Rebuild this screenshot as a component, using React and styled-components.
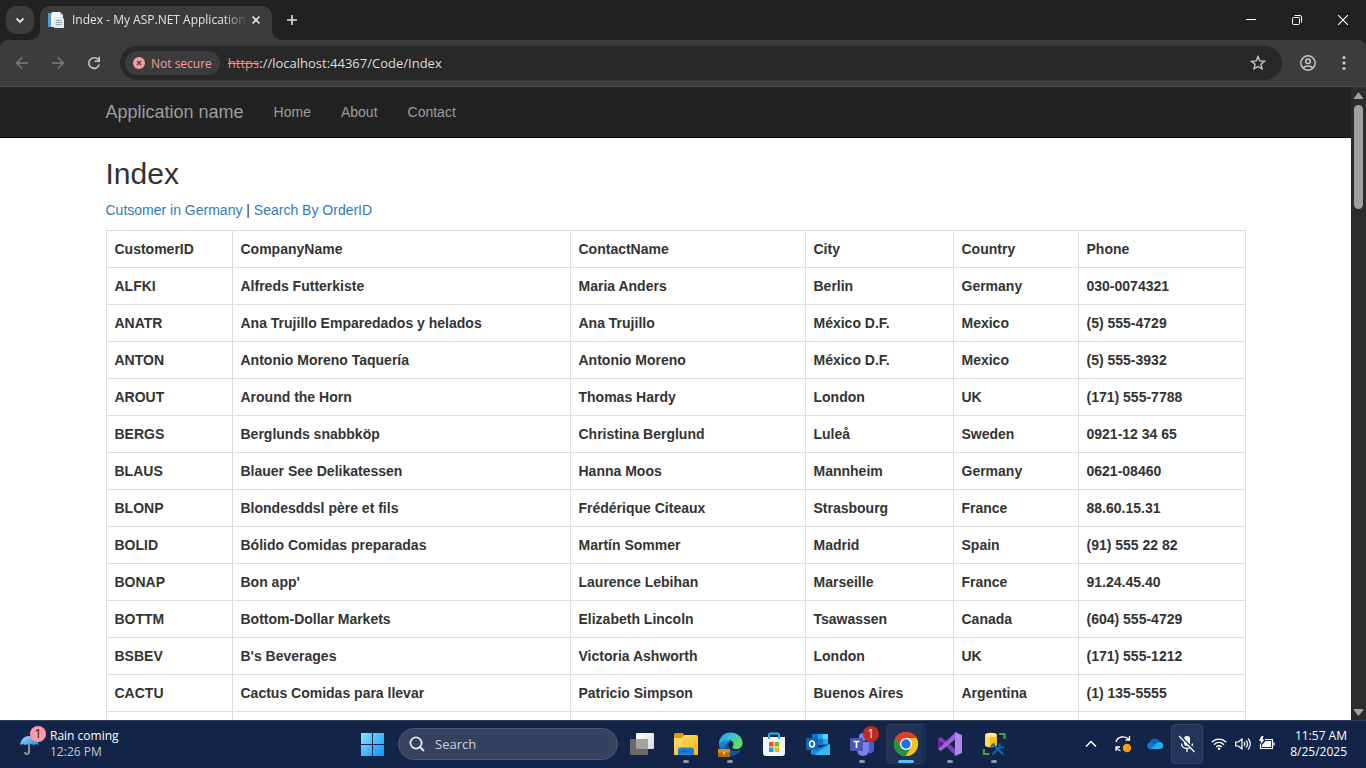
import React from "react";
import styled, { createGlobalStyle, css } from "styled-components";

const uiFont = `"Segoe UI", "Open Sans", "Noto Sans", sans-serif`;
const pageFont = `"Helvetica Neue", Helvetica, Arial, "Liberation Sans", sans-serif`;

const GlobalStyle = createGlobalStyle`
  *, *::before, *::after { box-sizing: border-box; }
  body { margin: 0; background: #202222; }
  button, input { font: inherit; color: inherit; }
  button { border: 0; padding: 0; margin: 0; background: none; cursor: default; }
`;

const Screen = styled.div`
  display: flex;
  flex-direction: column;
  height: 100vh;
  overflow: hidden;
  font-family: ${uiFont};
  font-size: 12px;
`;

/* ---------- browser frame ---------- */

const TabStrip = styled.header`
  display: flex;
  align-items: flex-end;
  flex: none;
  height: 40px;
  padding-left: 6px;
  background: #202222;
  color: #e3e3e3;
`;

const TabSearch = styled.button`
  display: grid;
  place-items: center;
  width: 28px;
  height: 28px;
  margin: 0 6px 6px 0;
  border-radius: 10px;
  background: #3c3c3c;
`;

const Tab = styled.div`
  position: relative;
  display: flex;
  align-items: center;
  width: 232px;
  height: 34px;
  padding: 0 8px 6px 8px;
  border-radius: 10px 10px 0 0;
  background: #3c3c3c;

  &::before,
  &::after {
    content: "";
    position: absolute;
    bottom: 0;
    width: 10px;
    height: 10px;
  }
  &::before {
    right: 100%;
    background: radial-gradient(circle at 0 0, transparent 10px, #3c3c3c 10px);
  }
  &::after {
    left: 100%;
    background: radial-gradient(circle at 100% 0, transparent 10px, #3c3c3c 10px);
  }
`;

const TabTitle = styled.span`
  flex: 1;
  min-width: 0;
  margin-left: 8px;
  overflow: hidden;
  white-space: nowrap;
  line-height: 16px;
  mask-image: linear-gradient(90deg, #000 calc(100% - 24px), transparent);
`;

const TabButton = styled.button`
  display: grid;
  place-items: center;
  width: 16px;
  height: 16px;
`;

const NewTab = styled.button`
  display: grid;
  place-items: center;
  width: 28px;
  height: 28px;
  margin: 0 0 6px 6px;
`;

const WindowControls = styled.div`
  display: flex;
  margin-left: auto;
  height: 40px;
  color: #fff;
`;

const WindowButton = styled.button`
  display: grid;
  place-items: center;
  width: 46px;
`;

const Toolbar = styled.div`
  display: flex;
  align-items: center;
  flex: none;
  height: 47px;
  padding: 0 4px;
  border-bottom: 1px solid #4a4a4a;
  border-radius: 8px 8px 0 0;
  background: #3c3c3c;
  color: #c7c7c7;
`;

const ToolButton = styled.button`
  display: grid;
  place-items: center;
  width: 36px;
  height: 34px;
  color: ${(p) => (p.disabled ? "#7c7c7c" : "#c7c7c7")};
`;

const Omnibox = styled.div`
  display: flex;
  align-items: center;
  flex: 1;
  height: 34px;
  margin: 0 8px;
  padding: 0 6px 0 5px;
  border-radius: 17px;
  background: #282828;
`;

const SecurityChip = styled.button`
  display: flex;
  align-items: center;
  gap: 6px;
  height: 24px;
  padding: 0 8px;
  margin-right: 8px;
  border-radius: 12px;
  background: #3c3c3c;
  color: #f2a097;
  font-weight: 500;
  white-space: nowrap;
`;

const UrlLabel = styled.label`
  color: #f28b82;
  font-size: 13px;
  line-height: 20px;
  text-decoration: line-through;
`;

const UrlInput = styled.input`
  flex: 1;
  min-width: 0;
  height: 20px;
  padding: 0;
  border: 0;
  outline: 0;
  background: none;
  color: #dedede;
  font-size: 13px;
`;

/* ---------- page ---------- */

const Viewport = styled.div`
  display: flex;
  flex: 1;
  min-height: 0;
`;

const Page = styled.div`
  flex: 1;
  min-width: 0;
  overflow: hidden;
  background: #fff;
  color: #333;
  font-family: ${pageFont};
  font-size: 14px;
  line-height: 20px;
`;

const Container = styled.div`
  max-width: 1170px;
  margin: 0 auto;
  padding: 0 15px;
`;

const Navbar = styled.nav`
  border-bottom: 1px solid #080808;
  background: #222;
`;

const NavInner = styled(Container)`
  display: flex;
  align-items: center;
  height: 50px;
`;

const NavLink = styled.a`
  padding-right: 15px;
  margin-right: 15px;
  color: #9d9d9d;
  font-size: ${(p) => (p.$brand ? "18px" : "14px")};
  text-decoration: none;
`;

const Heading = styled.h2`
  margin: 19px 0 10px;
  font-size: 30px;
  line-height: 33px;
  font-weight: 400;
`;

const Links = styled.p`
  margin: 0 0 10px;
  a {
    color: #337ab7;
    text-decoration: none;
  }
`;

const Table = styled.table`
  width: 100%;
  table-layout: fixed;
  border-collapse: collapse;
  border: 1px solid #ddd;
`;

const Cell = styled.th`
  height: 37px;
  padding: 8px;
  border: 1px solid #ddd;
  font-weight: 700;
  text-align: left;
`;

const ScrollTrack = styled.div`
  display: flex;
  flex-direction: column;
  align-items: center;
  width: 15px;
  padding: 5px 0 3px;
  background: #2c2c2c;
  color: #9f9f9f;
`;

const ScrollThumb = styled.div`
  width: 9px;
  height: 104px;
  margin: 5px 0 auto;
  border-radius: 5px;
  background: #9f9f9f;
`;

/* ---------- taskbar ---------- */

const Taskbar = styled.footer`
  display: grid;
  grid-template-columns: 1fr auto 1fr;
  flex: none;
  height: 48px;
  padding-bottom: 1px;
  border-top: 1px solid #35425c;
  background: #122549;
  color: #fff;
`;

const Weather = styled.button`
  position: relative;
  display: flex;
  align-items: center;
  gap: 4px;
  padding-left: 18px;
  justify-self: start;
  text-align: left;
  line-height: 16px;
`;

const Muted = styled.span`
  display: block;
  color: #c3c9d5;
`;

const Apps = styled.div`
  display: flex;
  align-items: center;
`;

const running = css`
  &::after {
    content: "";
    position: absolute;
    bottom: 4px;
    left: 50%;
    width: ${(p) => (p.$active ? "16px" : "6px")};
    height: 3px;
    border-radius: 2px;
    background: ${(p) => (p.$active ? "#4cc2ff" : "#8d98aa")};
    transform: translateX(-50%);
  }
`;

const AppButton = styled.button`
  position: relative;
  display: grid;
  place-items: center;
  width: 44px;
  height: 46px;
  ${(p) => (p.$running || p.$active ? running : "")}
`;

const ActivePlate = styled.span`
  display: grid;
  place-items: center;
  justify-self: start;
  width: 40px;
  height: 40px;
  margin-left: 2px;
  border: 1px solid #2b3a5a;
  border-right: 5px solid #1a2c50;
  border-radius: 5px;
  background: #213255;
  padding-left: 4px;
`;

const Badge = styled.span`
  position: absolute;
  top: 5px;
  left: ${(p) => (p.$soft ? "30px" : "23px")};
  width: 16px;
  height: 16px;
  border-radius: 8px;
  background: ${(p) => (p.$soft ? "#ff99a4" : "#c42b1c")};
  color: ${(p) => (p.$soft ? "#101010" : "#fff")};
  line-height: 16px;
  text-align: center;
`;

const SearchBox = styled.label`
  display: flex;
  align-items: center;
  gap: 10px;
  width: 220px;
  height: 32px;
  margin: 0 2px 0 4px;
  padding: 0 10px;
  border: 1px solid #4a5875;
  border-radius: 16px;
  background: #35425f;
  color: #e6e9ee;

  input {
    flex: 1;
    min-width: 0;
    padding: 0;
    border: 0;
    outline: 0;
    background: none;
    font-size: 13px;
  }
  input::placeholder {
    color: #cdd2dc;
    opacity: 1;
  }
`;

const Tray = styled.div`
  display: flex;
  align-items: center;
  justify-self: end;
  padding-right: 19px;
`;

const TrayButton = styled.button`
  display: grid;
  place-items: center;
  width: 32px;
  height: 40px;
  border: 1px solid ${(p) => (p.$boxed ? "#344463" : "transparent")};
  border-radius: 4px;
  background: ${(p) => (p.$boxed ? "#22345a" : "none")};
`;

const QuickSettings = styled.button`
  display: flex;
  gap: 8px;
  padding: 0 4px;
  margin-left: 4px;
`;

const Clock = styled.button`
  width: 68px;
  text-align: right;
  line-height: 16px;
  white-space: nowrap;
`;

/* ---------- icons ---------- */

const Icon = ({ w = 16, h, children, stroke = 1.5 }) => (
  <svg
    width={w}
    height={h || w}
    viewBox={`0 0 ${w} ${h || w}`}
    fill="none"
    stroke="currentColor"
    strokeWidth={stroke}
    aria-hidden="true"
  >
    {children}
  </svg>
);

const Favicon = () => (
  <Icon stroke={0}>
    <path d="M0 1h11v14H0z" fill="#e9eef2" />
    <path d="M0 1h3v14H0z" fill="#4f9bd0" />
    <path d="M4 0h8l3 3v8H4z" fill="#f6f9fb" />
    <path d="M6 5h8l2 2v9H6z" fill="#dfe6ec" />
    <path d="M8 8h5v1H8zM8 10h6v1H8zM8 12h6v1H8z" fill="#9aabb8" />
    <path d="M12 0v3h3z" fill="#b9c6d0" />
  </Icon>
);

const Umbrella = () => (
  <svg width="28" height="28" viewBox="0 0 28 28" aria-hidden="true">
    <defs>
      <linearGradient id="umb" x1="0" y1="0" x2="1" y2="1">
        <stop offset="0" stopColor="#a9dcff" />
        <stop offset="1" stopColor="#1d86e3" />
      </linearGradient>
    </defs>
    <path d="M11 14v8a2 2 0 0 1-4 0" fill="none" stroke="#8d8f94" strokeWidth="2" />
    <path d="M2 15C3 9 7 6 11 6s9 3 10 9c-2-1-4-1-5 0-2-1-7-1-9 0-1-1-3-1-5 0z" fill="url(#umb)" />
  </svg>
);

const StartLogo = () => (
  <svg width="24" height="24" viewBox="0 0 24 24" aria-hidden="true">
    <defs>
      <linearGradient id="win" x1="1" y1="1" x2="24" y2="24" gradientUnits="userSpaceOnUse">
        <stop offset="0" stopColor="#8be4ff" />
        <stop offset="1" stopColor="#0a93fb" />
      </linearGradient>
    </defs>
    <path fill="url(#win)" d="M1 1h11v11H1zM13 1h11v11H13zM1 13h11v11H1zM13 13h11v11H13z" />
  </svg>
);

const TaskView = () => (
  <svg width="24" height="24" viewBox="0 0 24 24" aria-hidden="true">
    <defs>
      <linearGradient id="tv" x1="0" y1="0" x2="1" y2="1">
        <stop offset="0" stopColor="#fff" />
        <stop offset="1" stopColor="#d9d9d9" />
      </linearGradient>
    </defs>
    <rect x="6" y="1" width="18" height="16" rx="1" fill="url(#tv)" />
    <rect x="0" y="7" width="18" height="16" rx="1" fill="#6a6a6a" />
    <rect x="6" y="7" width="12" height="10" fill="#a2a2a2" />
  </svg>
);

const Explorer = () => (
  <svg width="24" height="24" viewBox="0 0 24 24" aria-hidden="true">
    <defs>
      <linearGradient id="fol" x1="0" y1="0" x2="1" y2="1">
        <stop offset="0" stopColor="#ffe07a" />
        <stop offset="1" stopColor="#fbb50f" />
      </linearGradient>
    </defs>
    <path d="M0 2.500a1.500 1.500 0 0 1 1.500-1.500H9l1.500 3v3H0z" fill="#dc9a0b" />
    <path d="M0 6h8l2.500-3h12A1.500 1.500 0 0 1 24 4.500V23H0z" fill="url(#fol)" />
    <path d="M4 23v-5a2.500 2.500 0 0 1 2.500-2.500h11A2.500 2.500 0 0 1 20 18v5z" fill="#1581d8" />
    <path d="M7.500 19.500h9" stroke="#0c62b0" strokeWidth="1.500" />
  </svg>
);

const Edge = () => (
  <svg width="25" height="25" viewBox="0 0 25 25" aria-hidden="true">
    <defs>
      <linearGradient id="eg" x1="0" y1="0" x2="1" y2=".5">
        <stop offset="0" stopColor="#2193d8" />
        <stop offset=".5" stopColor="#35c3d3" />
        <stop offset="1" stopColor="#68dc55" />
      </linearGradient>
      <linearGradient id="eb" x1="0" y1="0" x2="0" y2="1">
        <stop offset="0" stopColor="#1b9de2" />
        <stop offset="1" stopColor="#0c4a9c" />
      </linearGradient>
    </defs>
    <path d="M1 12a11.500 11.500 0 0 0 18 10c2-1 3-3 3-4-5 3-12 1-12-5 0-2 1-3 2-4C9 6 2 7 1 12z" fill="url(#eb)" />
    <path d="M1 12C1 5 6 .5 12.500.5 19 .5 24.500 5 24.500 11c0 4-3 6-6 6-4 0-5-1-3.500-3 1.500-3-.5-6-5-6-4 0-7 1-9 4z" fill="url(#eg)" />
    <path d="M11 10c-3 6 2 11 12 8-3 5-9 7-13 5-4-4-4-10 1-13z" fill="#174f9c" />
    <rect x="0" y="17" width="12" height="8" rx="1" fill="#c4670c" />
    <path d="M0 17h12v3.500H0z" fill="#e08a1c" />
    <path d="M5 20h2v2.500H5z" fill="#ffd24a" />
  </svg>
);

const Store = () => (
  <svg width="24" height="24" viewBox="0 0 24 24" aria-hidden="true">
    <path d="M7 7V3a1.500 1.500 0 0 1 1.500-1.500h7A1.500 1.500 0 0 1 17 3v4" fill="none" stroke="#28b4f0" strokeWidth="2" />
    <path d="M1 5h22v16a3 3 0 0 1-3 3H4a3 3 0 0 1-3-3z" fill="#f4f5f7" />
    <path d="M6 5h2v2H6zM16 5h2v2h-2z" fill="#28b4f0" />
    <path d="M7 10h4.500v4.500H7z" fill="#f25022" />
    <path d="M12.500 10H17v4.500h-4.500z" fill="#7fba00" />
    <path d="M7 15.500h4.500V20H7z" fill="#00a4ef" />
    <path d="M12.500 15.500H17V20h-4.500z" fill="#ffb900" />
  </svg>
);

const Outlook = () => (
  <svg width="24" height="24" viewBox="0 0 24 24" aria-hidden="true">
    <path d="M6 2h16v11H6z" fill="#1373c4" />
    <path d="M12 2h5v5h-5z" fill="#28a8ea" />
    <path d="M17 2h5v5h-5z" fill="#50d9ff" />
    <path d="M12 7h5v5h-5z" fill="#0f78d4" />
    <path d="M17 7h5v5h-5z" fill="#28a8ea" />
    <path d="M5 12l9 4 9-4 1 1v9.500H5z" fill="#1490df" />
    <path d="M24 12v11H8z" fill="#35b8f1" />
    <rect x="0" y="6" width="12" height="12" rx="1" fill="#1066b8" />
    <ellipse cx="6" cy="12" rx="2.400" ry="3" fill="none" stroke="#fff" strokeWidth="1.600" />
  </svg>
);

const Teams = () => (
  <svg width="25" height="25" viewBox="0 0 25 25" aria-hidden="true">
    <circle cx="13" cy="5" r="4" fill="#7b83eb" />
    <circle cx="20" cy="7" r="3" fill="#5059c9" />
    <path d="M17 10h7v7a4 4 0 0 1-7 3z" fill="#5059c9" />
    <path d="M7 10h12v8a6 6 0 0 1-12 0z" fill="#7b83eb" />
    <rect x="0" y="6" width="13" height="13" rx="1" fill="#4b53bc" />
    <path d="M3.500 9.500h6M6.500 9.500v6.500" stroke="#fff" strokeWidth="1.700" />
  </svg>
);

const Chrome = () => (
  <svg width="24" height="24" viewBox="0 0 24 24" aria-hidden="true">
    <circle cx="12" cy="12" r="12" fill="#fbc116" />
    <path d="M1.600 6A12 12 0 0 1 22.400 6H12L6.800 15z" fill="#e33b2e" />
    <path d="M1.600 6A12 12 0 0 0 12 24l5.200-9H6.800z" fill="#229342" />
    <path d="M22.400 6H12l5.200 9L12 24A12 12 0 0 0 22.400 6z" fill="#fbc116" />
    <circle cx="12" cy="12" r="6" fill="#fff" />
    <circle cx="12" cy="12" r="4.700" fill="#1a73e8" />
  </svg>
);

const VisualStudio = () => (
  <svg width="24" height="24" viewBox="0 0 24 24" aria-hidden="true">
    <path d="M0 6.500L3 5v14l-3-1.500z" fill="#5d2b91" />
    <path d="M3 5l15 12.500V24L0 7z" fill="#7b3fb8" />
    <path d="M18 0v6.500L3 19l-3-2z" fill="#9b5fd6" />
    <path d="M17 0l7 3v18l-7 3z" fill="#b583ee" />
  </svg>
);

const Ssms = () => (
  <svg width="24" height="24" viewBox="0 0 24 24" aria-hidden="true">
    <path d="M3 3v10c0 3 12 3 12 0V3z" fill="#f5bd1d" />
    <path d="M3 3v10c0 1.500 2 2 5 2.200V4z" fill="#ffdb55" />
    <ellipse cx="9" cy="3" rx="6" ry="2.300" fill="#ffe98a" />
    <path d="M17 2h5.500v5M2 17v5h5.500" fill="none" stroke="#4b9a3f" strokeWidth="2.200" />
    <path d="M10.500 22.500l8-8M12 13.500l9.500 9" stroke="#1464b4" strokeWidth="2.200" />
    <path d="M9 14.500l3.500-3M17.500 11.500v4h4.500" fill="none" stroke="#1464b4" strokeWidth="2" />
  </svg>
);

/* ---------- data ---------- */

const columns = [
  ["CustomerID", 126],
  ["CompanyName", 338],
  ["ContactName", 235],
  ["City", 148],
  ["Country", 125],
  ["Phone"],
];

const customers = [
  ["ALFKI", "Alfreds Futterkiste", "Maria Anders", "Berlin", "Germany", "030-0074321"],
  ["ANATR", "Ana Trujillo Emparedados y helados", "Ana Trujillo", "México D.F.", "Mexico", "(5) 555-4729"],
  ["ANTON", "Antonio Moreno Taquería", "Antonio Moreno", "México D.F.", "Mexico", "(5) 555-3932"],
  ["AROUT", "Around the Horn", "Thomas Hardy", "London", "UK", "(171) 555-7788"],
  ["BERGS", "Berglunds snabbköp", "Christina Berglund", "Luleå", "Sweden", "0921-12 34 65"],
  ["BLAUS", "Blauer See Delikatessen", "Hanna Moos", "Mannheim", "Germany", "0621-08460"],
  ["BLONP", "Blondesddsl père et fils", "Frédérique Citeaux", "Strasbourg", "France", "88.60.15.31"],
  ["BOLID", "Bólido Comidas preparadas", "Martín Sommer", "Madrid", "Spain", "(91) 555 22 82"],
  ["BONAP", "Bon app'", "Laurence Lebihan", "Marseille", "France", "91.24.45.40"],
  ["BOTTM", "Bottom-Dollar Markets", "Elizabeth Lincoln", "Tsawassen", "Canada", "(604) 555-4729"],
  ["BSBEV", "B's Beverages", "Victoria Ashworth", "London", "UK", "(171) 555-1212"],
  ["CACTU", "Cactus Comidas para llevar", "Patricio Simpson", "Buenos Aires", "Argentina", "(1) 135-5555"],
  ["", "", "", "", "", ""],
];

const apps = [
  { name: "Task View", icon: TaskView },
  { name: "File Explorer", icon: Explorer, running: true },
  { name: "Microsoft Edge", icon: Edge, running: true },
  { name: "Microsoft Store", icon: Store },
  { name: "Outlook", icon: Outlook },
  { name: "Microsoft Teams", icon: Teams, running: true, badge: "1" },
  { name: "Google Chrome", icon: Chrome, active: true },
  { name: "Visual Studio", icon: VisualStudio, running: true },
  { name: "SQL Server Management Studio", icon: Ssms, running: true },
];

/* ---------- sections ---------- */

const BrowserFrame = () => (
  <>
    <TabStrip>
      <TabSearch aria-label="Search tabs">
        <Icon w={12} stroke={1.8}><path d="M2.500 4.500L6 8l3.500-3.500" /></Icon>
      </TabSearch>
      <Tab>
        <Favicon />
        <TabTitle>Index - My ASP.NET Application</TabTitle>
        <TabButton aria-label="Close tab">
          <Icon w={10} stroke={1.6}><path d="M1.500 1.500l7 7M8.500 1.500l-7 7" /></Icon>
        </TabButton>
      </Tab>
      <NewTab aria-label="New tab">
        <Icon w={12} stroke={1.6}><path d="M6 1v10M1 6h10" /></Icon>
      </NewTab>
      <WindowControls>
        <WindowButton aria-label="Minimize">
          <Icon w={10} stroke={1}><path d="M0 4.500h10" /></Icon>
        </WindowButton>
        <WindowButton aria-label="Restore">
          <Icon w={10} stroke={1}>
            <rect x=".5" y="2.500" width="7" height="7" rx="1" />
            <path d="M2.500.5H8A1.500 1.500 0 0 1 9.500 2v5.500" />
          </Icon>
        </WindowButton>
        <WindowButton aria-label="Close">
          <Icon w={10} stroke={1.1}><path d="M0 0l10 10M10 0L0 10" /></Icon>
        </WindowButton>
      </WindowControls>
    </TabStrip>
    <Toolbar>
      <ToolButton disabled aria-label="Back">
        <Icon><path d="M14 8H3M8 2.500L2.500 8 8 13.500" /></Icon>
      </ToolButton>
      <ToolButton disabled aria-label="Forward">
        <Icon><path d="M2 8h11M8 2.500L13.500 8 8 13.500" /></Icon>
      </ToolButton>
      <ToolButton aria-label="Reload">
        <Icon stroke={1.6}>
          <path d="M13.200 9.500A5.300 5.300 0 1 1 12 4.500L13.500 6" />
          <path d="M13.200 1.800v4.500H8.700" />
        </Icon>
      </ToolButton>
      <Omnibox>
        <SecurityChip>
          <Icon w={12} stroke={1.3}>
            <circle cx="6" cy="6" r="6" fill="currentColor" stroke="none" />
            <path d="M4 4l4 4M8 4L4 8" stroke="#3c3c3c" />
          </Icon>
          Not secure
        </SecurityChip>
        <UrlLabel htmlFor="url">https</UrlLabel>
        <UrlInput id="url" type="text" defaultValue="://localhost:44367/Code/Index" />
        <ToolButton aria-label="Bookmark this tab">
          <Icon stroke={1.4}>
            <path d="M8 1.600l1.800 4.300 4.700.4-3.600 3 1.100 4.600L8 11.500l-4 2.400 1.100-4.600-3.600-3 4.700-.4z" />
          </Icon>
        </ToolButton>
      </Omnibox>
      <ToolButton aria-label="Profile">
        <Icon>
          <circle cx="8" cy="8" r="7.200" />
          <circle cx="8" cy="6.300" r="2.300" />
          <path d="M3 13c2.500-2.700 7.500-2.700 10 0" />
        </Icon>
      </ToolButton>
      <ToolButton aria-label="Menu">
        <Icon stroke={0}>
          <g fill="currentColor">
            <circle cx="8" cy="2.500" r="1.600" />
            <circle cx="8" cy="8" r="1.600" />
            <circle cx="8" cy="13.500" r="1.600" />
          </g>
        </Icon>
      </ToolButton>
    </Toolbar>
  </>
);

const CustomerPage = () => (
  <Viewport>
    <Page>
      <Navbar>
        <NavInner>
          <NavLink $brand href="#">Application name</NavLink>
          <NavLink href="#home">Home</NavLink>
          <NavLink href="#about">About</NavLink>
          <NavLink href="#contact">Contact</NavLink>
        </NavInner>
      </Navbar>
      <Container as="main">
        <Heading>Index</Heading>
        <Links>
          <a href="#germany">Cutsomer in Germany</a> | <a href="#order">Search By OrderID</a>
        </Links>
        <Table>
          <colgroup>
            {columns.map(([name, width]) => <col key={name} width={width} />)}
          </colgroup>
          <thead>
            <tr>{columns.map(([name]) => <Cell key={name} scope="col">{name}</Cell>)}</tr>
          </thead>
          <tbody>
            {customers.map((row) => (
              <tr key={row[0]}>
                {row.map((value, i) => <Cell as="td" key={i}>{value}</Cell>)}
              </tr>
            ))}
          </tbody>
        </Table>
      </Container>
    </Page>
    <ScrollTrack>
      <Icon w={9} h={8} stroke={0}><path d="M4.500 0L9 6v1H0V6z" fill="currentColor" /></Icon>
      <ScrollThumb />
      <Icon w={9} h={8} stroke={0}><path d="M0 0h9v1.500L4.500 7 0 1.500z" fill="currentColor" /></Icon>
    </ScrollTrack>
  </Viewport>
);

const DesktopTaskbar = () => (
  <Taskbar>
    <Weather>
      <Umbrella />
      <Badge $soft>1</Badge>
      <span>
        Rain coming
        <Muted>12:26 PM</Muted>
      </span>
    </Weather>
    <Apps>
      <AppButton aria-label="Start"><StartLogo /></AppButton>
      <SearchBox>
        <Icon stroke={1.8}>
          <circle cx="7" cy="7" r="5.600" />
          <path d="M11 11l4 4" />
        </Icon>
        <input type="search" placeholder="Search" aria-label="Search" />
      </SearchBox>
      {apps.map(({ name, icon: AppIcon, running: isRunning, active, badge }) => (
        <AppButton key={name} aria-label={name} $running={isRunning} $active={active}>
          {active ? <ActivePlate><AppIcon /></ActivePlate> : <AppIcon />}
          {badge && <Badge>{badge}</Badge>}
        </AppButton>
      ))}
    </Apps>
    <Tray>
      <TrayButton aria-label="Show hidden icons">
        <Icon w={12}><path d="M1 8.500l5-5 5 5" /></Icon>
      </TrayButton>
      <TrayButton aria-label="Updates">
        <Icon w={18} stroke={1.3}>
          <path d="M2 7C3.500 1.500 11 0 15 4.500M15.500 1v4h-4M2 16v-4h4M2.500 12.500c1 1.500 2 2.500 4 3.500" />
          <circle cx="13" cy="13" r="4.200" fill="#ff9b0a" stroke="none" />
        </Icon>
      </TrayButton>
      <TrayButton aria-label="OneDrive">
        <Icon w={16} h={12} stroke={0}>
          <path d="M3.500 11a3.300 3.300 0 0 1-.5-6.500 5 5 0 0 1 9.500-.5 3.500 3.500 0 0 1 .5 7z" fill="#28a8ea" />
          <path d="M3 4.500A5 5 0 0 1 12.500 4C10 4 9 6 8 7z" fill="#0364b8" />
          <path d="M3.500 11a3.300 3.300 0 0 1 0-6.500c2 0 3 1.500 5 2.500z" fill="#0f78d4" />
        </Icon>
      </TrayButton>
      <TrayButton $boxed aria-label="Microphone muted">
        <Icon w={18} stroke={1.3}>
          <rect x="6" y="1" width="6" height="10" rx="3" fill="currentColor" stroke="none" />
          <path d="M3.500 8.500c0 6.500 11 6.500 11 0M9 13.500V17" />
          <path d="M2.500 1l14.500 15" stroke="#22345a" strokeWidth="2" />
          <path d="M1 1l15.500 16" />
        </Icon>
      </TrayButton>
      <QuickSettings aria-label="Network, volume and battery">
        <Icon stroke={1.3}>
          <path d="M.8 6.200c4-4.200 10.400-4.200 14.400 0M3 8.700c2.800-3 7.200-3 10 0M5.200 11c1.600-1.700 4-1.700 5.600 0" />
          <circle cx="8" cy="12.800" r="1.300" fill="currentColor" stroke="none" />
        </Icon>
        <Icon stroke={1.2}>
          <path d="M.7 6v4h2.600L7 13V3L3.300 6zM9 6c1 1.200 1 2.800 0 4M11 4.300c2 2 2 5.400 0 7.400M13 2.500c3 3 3 8 0 11" />
        </Icon>
        <Icon stroke={1.2}>
          <path d="M6 3.500h7.500v9H1.500V8M15 6.500v3" />
          <path d="M6.500 5H12v6H3V9z" fill="currentColor" stroke="none" />
          <path d="M2.500 0L0 5h2L1.500 8.500 5.500 3.500H3.500L4.500 0z" fill="currentColor" stroke="none" />
        </Icon>
      </QuickSettings>
      <Clock>
        11:57 AM
        <br />
        8/25/2025
      </Clock>
    </Tray>
  </Taskbar>
);

export default function App() {
  return (
    <Screen>
      <GlobalStyle />
      <BrowserFrame />
      <CustomerPage />
      <DesktopTaskbar />
    </Screen>
  );
}
